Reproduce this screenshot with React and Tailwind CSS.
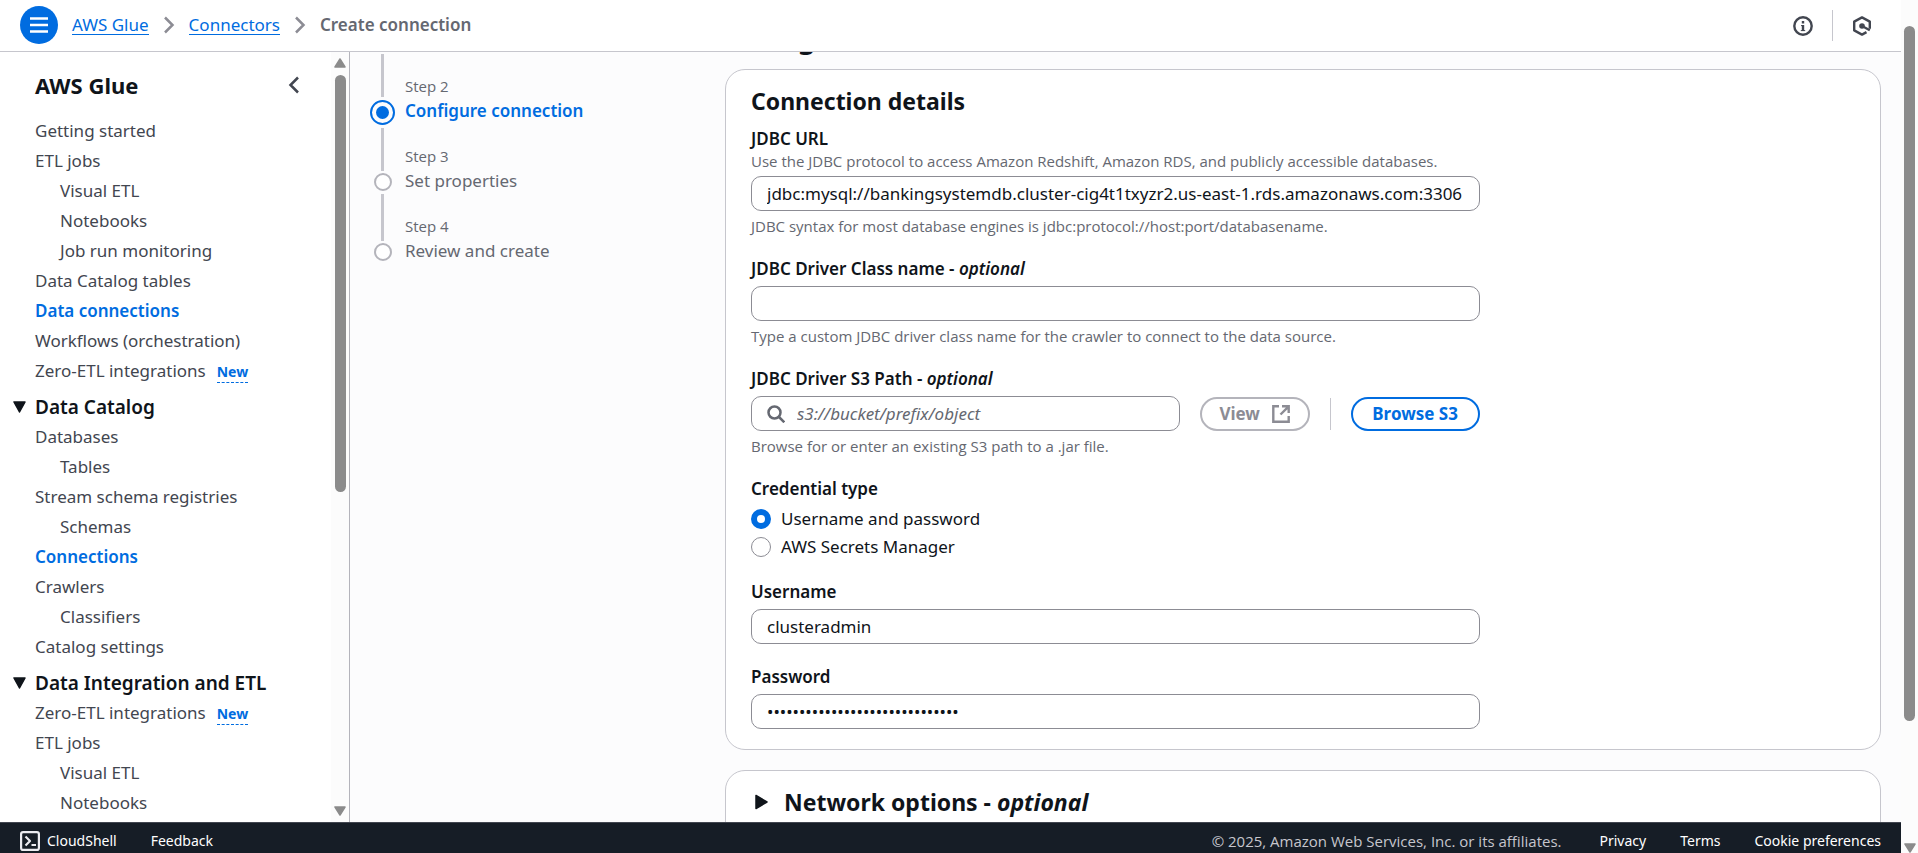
import React from "react";

const NAV = [
  { label: "Getting started" },
  { label: "ETL jobs" },
  { label: "Visual ETL", nested: true },
  { label: "Notebooks", nested: true },
  { label: "Job run monitoring", nested: true },
  { label: "Data Catalog tables" },
  { label: "Data connections", active: true },
  { label: "Workflows (orchestration)" },
  { label: "Zero-ETL integrations", isNew: true },
];

const CATALOG = [
  { label: "Databases" },
  { label: "Tables", nested: true },
  { label: "Stream schema registries" },
  { label: "Schemas", nested: true },
  { label: "Connections", active: true },
  { label: "Crawlers" },
  { label: "Classifiers", nested: true },
  { label: "Catalog settings" },
];

const INTEGRATION = [
  { label: "Zero-ETL integrations", isNew: true },
  { label: "ETL jobs" },
  { label: "Visual ETL", nested: true },
  { label: "Notebooks", nested: true },
];

function NavList({ items }) {
  return (
    <ul>
      {items.map((item) => (
        <li key={item.label} className={item.nested ? "flex h-[30px] items-center pl-[25px]" : "flex h-[30px] items-center"}>
          <a href="#" className={item.active ? "font-semibold text-[#006ce0]" : "text-[#424650]"}>
            {item.label}
          </a>
          {item.isNew && (
            <button type="button" className="ml-[11px] mt-[3px] border-b border-dashed border-[#006ce0] text-sm font-bold leading-[20px] text-[#006ce0]">
              New
            </button>
          )}
        </li>
      ))}
    </ul>
  );
}

function NavSection({ title, items }) {
  return (
    <section className="mt-1.5">
      <button type="button" className="-ml-[22px] flex h-[30px] items-center gap-[9px] text-[19px] font-semibold text-[#0f141a]">
        <svg viewBox="0 0 13 12" className="h-3 w-[13px]" aria-hidden="true">
          <path d="M1 1h11L6.5 11z" fill="#0f141a" stroke="#0f141a" strokeWidth="1.5" strokeLinejoin="round" />
        </svg>
        {title}
      </button>
      <NavList items={items} />
    </section>
  );
}

function Arrow({ down }) {
  return (
    <svg viewBox="0 0 12 10" className="h-2.5 w-3 shrink-0" aria-hidden="true">
      <path d={down ? "M1 1h10L6 9z" : "M1 9h10L6 1z"} fill="#8b8b8b" stroke="#8b8b8b" strokeWidth="1.5" strokeLinejoin="round" />
    </svg>
  );
}

function Chevron() {
  return (
    <svg viewBox="0 0 12 18" className="h-[18px] w-3" fill="none" stroke="#8c8c94" strokeWidth="2.5" aria-hidden="true">
      <path d="M2 1.5 9.5 9 2 16.5" />
    </svg>
  );
}

const inputClass =
  "h-[35px] w-full rounded-[10px] border border-[#8c8c94] bg-white px-[15px] pb-px text-[17px] text-[#0f141a] outline-none";

const smallClass = "font-['Open_Sans','Noto_Sans',sans-serif] text-[15px] text-[#656871]";

function Field({ id, label, optional, description, hint, children }) {
  return (
    <div className="flex flex-col">
      <label htmlFor={id} className="font-semibold leading-[25px] text-[#0f141a]">
        {label}
        {optional && (
          <>
            {" - "}
            <i>optional</i>
          </>
        )}
      </label>
      {description && <p className={"leading-[20px] " + smallClass}>{description}</p>}
      <div className="mt-[5px]">{children}</div>
      {hint && <p className={"mt-[5px] leading-[20px] " + smallClass}>{hint}</p>}
    </div>
  );
}

function Radio({ label, checked }) {
  return (
    <label className="flex h-[25px] items-center gap-2.5">
      <input
        type="radio"
        name="credential"
        defaultChecked={checked}
        className="size-5 appearance-none rounded-full border border-[#8c8c94] bg-white checked:border-[6px] checked:border-[#006ce0]"
      />
      {label}
    </label>
  );
}

function Step({ number, title, active, last }) {
  return (
    <li className="flex h-[70px] gap-[10px]">
      <div className="flex w-[25px] flex-col items-center">
        <div className={active ? "mt-[23px] flex size-[25px] shrink-0 items-center justify-center rounded-full border-2 border-[#006ce0]" : "mt-[26px] size-[18px] shrink-0 rounded-full border-2 border-[#b4b4bb] bg-white"}>
          {active && <span className="size-[13px] rounded-full bg-[#006ce0]" />}
        </div>
        {!last && <span className={active ? "mt-[3px] h-[43px] w-[3px] shrink-0 bg-[#c6c6cd]" : "mt-[3px] h-[47px] w-[3px] shrink-0 bg-[#c6c6cd]"} />}
      </div>
      <div>
        <p className={"leading-[18px] " + smallClass}>Step {number}</p>
        <a href="#" className={active ? "block font-semibold leading-[32px] text-[#006ce0]" : "block leading-[32px] text-[#656871]"}>
          {title}
        </a>
      </div>
    </li>
  );
}

export default function App() {
  return (
    <div className="flex h-screen overflow-hidden bg-[#fcfcfd] font-['Noto_Sans',sans-serif] text-[17px] text-[#0f141a]">
      <div className="flex min-w-0 flex-1 flex-col">
        <header className="flex h-[52px] shrink-0 items-center justify-between border-b border-[#c6c6cd] bg-white pl-5 pr-[29px]">
          <nav aria-label="Breadcrumb" className="flex items-center gap-3.5 pb-px">
            <button type="button" aria-label="Open navigation" className="flex size-[38px] items-center justify-center rounded-full bg-[#006ce0]">
              <svg viewBox="0 0 18 16" className="h-4 w-[18px]" stroke="#fff" strokeWidth="2.4" aria-hidden="true">
                <path d="M0 1.5h18M0 8h18M0 14.5h18" />
              </svg>
            </button>
            <a href="#" className="border-b border-[#006ce0] leading-[19px] text-[#006ce0]">AWS Glue</a>
            <Chevron />
            <a href="#" className="border-b border-[#006ce0] leading-[19px] text-[#006ce0]">Connectors</a>
            <Chevron />
            <span className="pb-px font-semibold leading-[19px] text-[#656871]">Create connection</span>
          </nav>
          <div className="flex items-center gap-[19px]">
            <button type="button" aria-label="Info">
              <svg viewBox="0 0 20 20" className="size-5" fill="none" stroke="#424650" strokeWidth="2.4" aria-hidden="true">
                <circle cx="10" cy="10" r="8.7" />
                <path d="M10 5v2.4M10 9v6" />
                <path d="M8 9.6h2M7.8 14.6h4.4" strokeWidth="1" />
              </svg>
            </button>
            <span className="h-[31px] w-px bg-[#c6c6cd]" />
            <button type="button" aria-label="Amazon Q">
              <svg viewBox="0 0 20 20" className="size-5" fill="none" stroke="#424650" strokeWidth="2.4" strokeLinejoin="round" aria-hidden="true">
                <path d="M17.8 12.8V5.6L10 1.4 2.2 5.6v8.8l7.8 4.2 4.5-2.5" />
                <circle cx="10" cy="10" r="2.8" fill="#424650" stroke="none" />
                <path d="m10 10 7.8 4.2" />
              </svg>
            </button>
          </div>
        </header>

        <div className="flex min-h-0 flex-1">
          <aside className="flex w-[350px] shrink-0 border-r border-[#b4b4bb] bg-white">
            <div className="flex-1 overflow-hidden pl-[35px]">
              <div className="flex h-16 items-center justify-between pr-[31px] pt-0.5">
                <h2 className="text-[22px] font-bold leading-[30px]">AWS Glue</h2>
                <button type="button" aria-label="Close navigation">
                  <svg viewBox="0 0 12 18" className="h-[18px] w-3" fill="none" stroke="#424650" strokeWidth="2.5" aria-hidden="true">
                    <path d="M10 1.5 2.5 9l7.5 7.5" />
                  </svg>
                </button>
              </div>
              <NavList items={NAV} />
              <NavSection title="Data Catalog" items={CATALOG} />
              <NavSection title="Data Integration and ETL" items={INTEGRATION} />
            </div>
            <div className="flex w-[18px] shrink-0 flex-col items-center justify-between bg-[#fcfcfc] py-1.5">
              <Arrow />
              <div className="mb-auto mt-[7px] h-[55%] w-[11px] rounded-full bg-[#8b8b8b]" />
              <Arrow down />
            </div>
          </aside>

          <div className="flex min-w-0 flex-1 overflow-hidden pl-5 pr-5">
            <nav aria-label="Steps" className="w-[355px] shrink-0">
              <div className="flex h-[45px] w-[25px] items-end justify-center">
                <span className="h-[43px] w-[3px] bg-[#c6c6cd]" />
              </div>
              <ol className="-mt-[20px]">
                <Step number={2} title="Configure connection" active />
                <Step number={3} title="Set properties" />
                <Step number={4} title="Review and create" last />
              </ol>
            </nav>

            <main className="flex min-w-0 flex-1 flex-col">
              <div className="flex h-[17px] shrink-0 items-end overflow-hidden pb-[14px]">
                <h1 className="text-[28px] font-bold leading-[36px]">Configure connection</h1>
              </div>
              <section className="shrink-0 rounded-[20px] border border-[#c6c6cd] bg-white px-[25px] pb-5 pt-4">
                <h2 className="text-[23px] font-bold leading-[30px]">Connection details</h2>
                <form className="mt-2.5 flex w-[66%] flex-col gap-5">
                  <Field
                    id="url"
                    label="JDBC URL"
                    description="Use the JDBC protocol to access Amazon Redshift, Amazon RDS, and publicly accessible databases."
                    hint="JDBC syntax for most database engines is jdbc:protocol://host:port/databasename."
                  >
                    <input id="url" type="text" className={inputClass} defaultValue="jdbc:mysql://bankingsystemdb.cluster-cig4t1txyzr2.us-east-1.rds.amazonaws.com:3306" />
                  </Field>
                  <Field id="driver" label="JDBC Driver Class name" optional hint="Type a custom JDBC driver class name for the crawler to connect to the data source.">
                    <input id="driver" type="text" className={inputClass} />
                  </Field>
                  <Field id="path" label="JDBC Driver S3 Path" optional hint="Browse for or enter an existing S3 path to a .jar file.">
                    <div className="flex items-center gap-5">
                      <div className="flex h-[35px] min-w-0 flex-1 items-center gap-3 rounded-[10px] border border-[#8c8c94] bg-white px-[15px]">
                        <svg viewBox="0 0 18 18" className="size-[18px] shrink-0" fill="none" stroke="#656871" strokeWidth="2.5" aria-hidden="true">
                          <circle cx="7.5" cy="7.5" r="6" />
                          <path d="m12 12 5.3 5.3" />
                        </svg>
                        <input id="path" type="text" placeholder="s3://bucket/prefix/object" className="min-w-0 flex-1 outline-none placeholder:italic placeholder:text-[#656871]" />
                      </div>
                      <button type="button" disabled className="flex h-[34px] w-[110px] items-center justify-center gap-3 rounded-full border-2 border-[#b4b4bb] font-bold text-[#8c8c94]">
                        View
                        <svg viewBox="0 0 18 18" className="size-[18px]" fill="none" stroke="#8c8c94" strokeWidth="2.4" aria-hidden="true">
                          <path d="M7 1.3H1.3v15.4h15.4V11M10 1.3h6.7V8M16.2 1.8 8.5 9.5" />
                        </svg>
                      </button>
                      <span className="h-8 w-px bg-[#c6c6cd]" />
                      <button type="button" className="flex h-[34px] w-[129px] items-center justify-center rounded-full border-2 border-[#006ce0] font-bold text-[#006ce0]">
                        Browse S3
                      </button>
                    </div>
                  </Field>
                  <fieldset className="flex flex-col gap-[3px]">
                    <legend className="mb-[5px] font-semibold leading-[25px]">Credential type</legend>
                    <Radio label="Username and password" checked />
                    <Radio label="AWS Secrets Manager" />
                  </fieldset>
                  <Field id="username" label="Username">
                    <input id="username" type="text" className={inputClass} defaultValue="clusteradmin" />
                  </Field>
                  <Field id="password" label="Password">
                    <input id="password" type="password" className={inputClass} defaultValue="••••••••••••••••••••••••••••••" />
                  </Field>
                </form>
              </section>
              <section className="mt-5 h-24 shrink-0 rounded-[20px] border border-[#c6c6cd] bg-white px-[25px] pt-4">
                <button type="button" className="flex items-center gap-4 pl-1 text-[23px] font-bold leading-[30px]">
                  <svg viewBox="0 0 13 16" className="h-4 w-[13px]" aria-hidden="true">
                    <path d="M1 1.5v13L12 8z" fill="#0f141a" stroke="#0f141a" strokeWidth="1.5" strokeLinejoin="round" />
                  </svg>
                  <span>
                    Network options - <i>optional</i>
                  </span>
                </button>
              </section>
            </main>
          </div>
        </div>

        <footer className="flex h-[31px] shrink-0 items-end justify-between overflow-hidden border-t border-[#424650] bg-[#161d26] px-5 text-sm leading-[24px] text-white">
          <div className="flex gap-[34px]">
            <button type="button" className="flex items-center gap-[7px]">
              <svg viewBox="0 0 20 20" className="size-5" fill="none" stroke="#ebebf0" strokeWidth="2.2" strokeLinejoin="round" aria-hidden="true">
                <rect x="1.1" y="1.1" width="17.8" height="17.8" rx="2" />
                <path d="m5.5 5.5 4.5 4.5-4.5 4.5M11.5 14h4.5" />
              </svg>
              CloudShell
            </button>
            <a href="#">Feedback</a>
          </div>
          <div className="flex gap-[34px]">
            <span className="mr-1 font-['Open_Sans','Noto_Sans',sans-serif] text-[15px] leading-[24px] text-[#c6c6cd]">
              © 2025, Amazon Web Services, Inc. or its affiliates.
            </span>
            <a href="#">Privacy</a>
            <a href="#">Terms</a>
            <a href="#">Cookie preferences</a>
          </div>
        </footer>
      </div>

      <div className="flex w-[17px] shrink-0 flex-col items-center bg-[#fcfcfc] pt-[26px]">
        <div className="h-[84%] w-[11px] rounded-full bg-[#8b8b8b]" />
        <div className="mt-auto h-2.5 overflow-hidden">
          <Arrow down />
        </div>
      </div>
    </div>
  );
}
